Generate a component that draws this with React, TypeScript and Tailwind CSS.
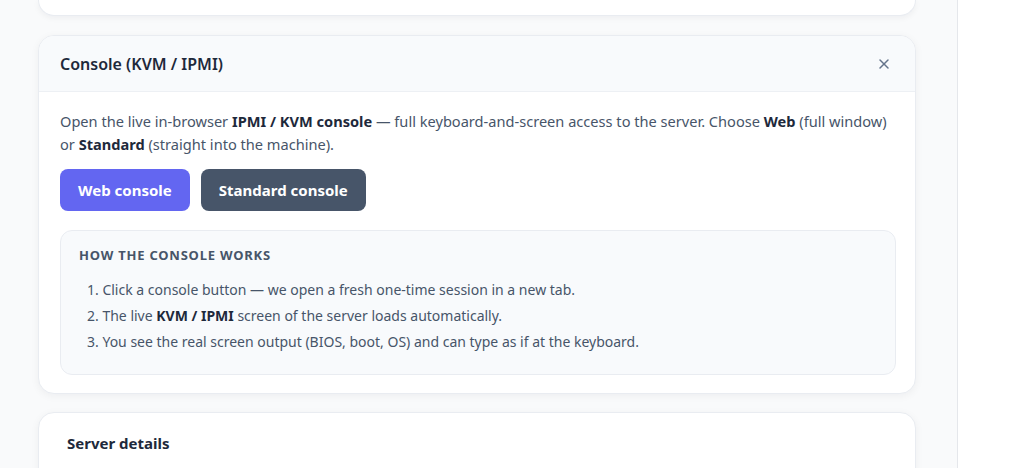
import React from 'react';
import { X } from 'lucide-react';

const font = { fontFamily: '"Noto Sans", "Open Sans", sans-serif' };

const steps: React.ReactNode[] = [
  <>Click a console button — we open a fresh one-time session in a new tab.</>,
  <>
    The live <b className="font-bold text-[#1e293b]">KVM / IPMI</b> screen of the server loads automatically.
  </>,
  <>You see the real screen output (BIOS, boot, OS) and can type as if at the keyboard.</>,
];

export default function App() {
  return (
    <div className="flex h-[468px] overflow-hidden bg-white" style={font}>
      <main className="w-[957px] shrink-0 bg-[#f9fafb] pl-[38px] pr-[41px]">
        {/* previous card, scrolled off */}
        <div className="h-[16px] rounded-b-2xl border border-t-0 border-[#e9ecf1] bg-white shadow-[0_2px_6px_rgba(15,23,42,0.05)]" />

        {/* Console card */}
        <section className="mt-[19px] overflow-hidden rounded-2xl border border-[#e9ecf1] bg-white shadow-[0_2px_8px_rgba(15,23,42,0.05)]">
          <header className="flex h-[56px] items-center justify-between border-b border-[#edf0f4] bg-[#f8fafc] pl-[21px] pr-[23px]">
            <h2 className="text-[16px] font-semibold text-[#1e293b]">Console (KVM / IPMI)</h2>
            <button className="text-[#64748b]">
              <X size={16} strokeWidth={2.25} />
            </button>
          </header>

          <div className="pb-[18px] pl-[21px] pr-[19px] pt-[18px]">
            <p className="text-[14.6px] leading-[23px] text-[#475569]">
              Open the live in-browser <b className="font-bold text-[#1e293b]">IPMI / KVM console</b> — full
              keyboard-and-screen access to the server. Choose <b className="font-bold text-[#1e293b]">Web</b> (full
              window) or <b className="font-bold text-[#1e293b]">Standard</b> (straight into the machine).
            </p>

            <div className="mt-[13px] flex gap-[11px]">
              <button className="h-[42px] rounded-lg bg-[#6366f1] px-[18px] text-[15px] font-bold text-white">
                Web console
              </button>
              <button className="h-[42px] rounded-lg bg-[#475569] px-[18px] text-[15px] font-bold text-white">
                Standard console
              </button>
            </div>

            <div className="mt-[19px] rounded-xl border border-[#e9ecf1] bg-[#f8fafc] px-[18px] pb-[19px] pt-[15px]">
              <h3 className="text-[13px] font-bold uppercase leading-[18px] tracking-[0.06em] text-[#475569]">
                How the console works
              </h3>
              <ol className="mt-[13px] list-inside list-decimal pl-[8px] text-[14px] leading-[26px] text-[#475569]">
                {steps.map((s, i) => (
                  <li key={i}>{s}</li>
                ))}
              </ol>
            </div>
          </div>
        </section>

        {/* Server details card */}
        <section className="mt-[18px] h-[80px] rounded-2xl border border-[#e9ecf1] bg-white px-[28px] pt-[19px] shadow-[0_2px_8px_rgba(15,23,42,0.05)]">
          <h2 className="text-[15px] font-bold leading-[22px] text-[#1e293b]">Server details</h2>
        </section>
      </main>
      <aside className="flex-1 border-l border-[#e5e7eb] bg-white" />
    </div>
  );
}
